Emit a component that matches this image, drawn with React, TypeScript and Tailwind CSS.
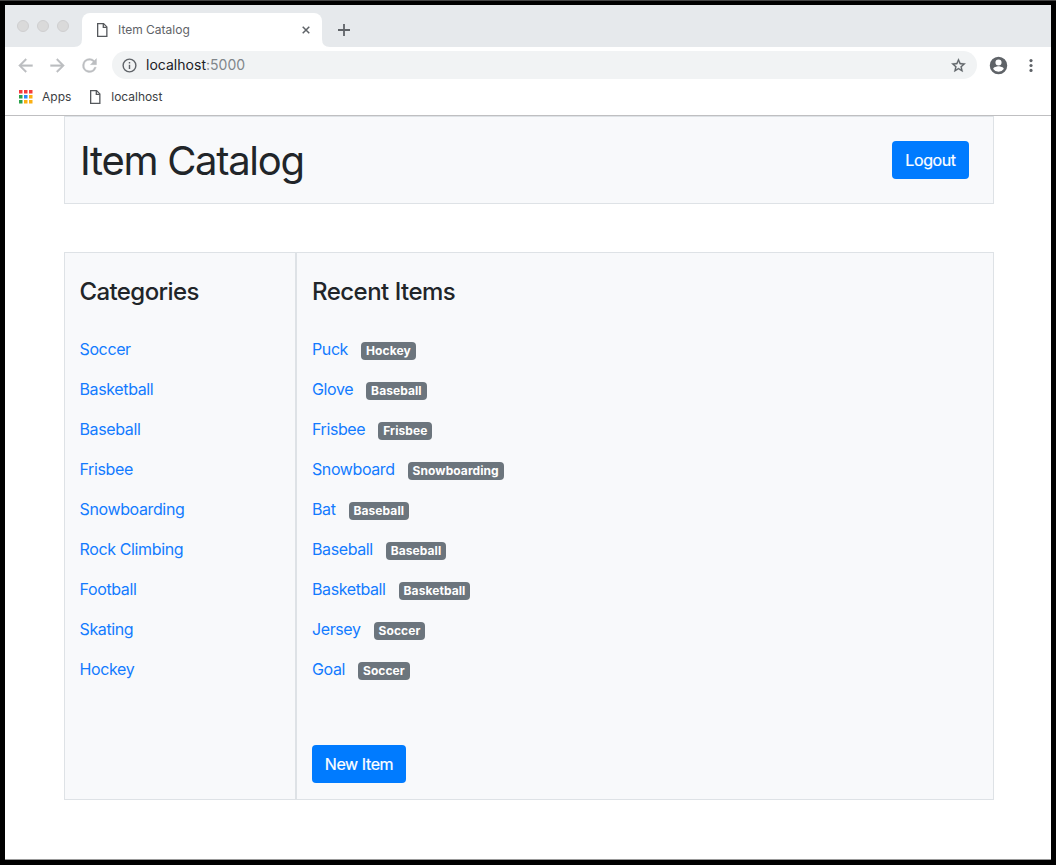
import React from "react";

const categories = ["Soccer", "Basketball", "Baseball", "Frisbee", "Snowboarding", "Rock Climbing", "Football", "Skating", "Hockey"];

const items = [
  { name: "Puck", category: "Hockey" },
  { name: "Glove", category: "Baseball" },
  { name: "Frisbee", category: "Frisbee" },
  { name: "Snowboard", category: "Snowboarding" },
  { name: "Bat", category: "Baseball" },
  { name: "Baseball", category: "Baseball" },
  { name: "Basketball", category: "Basketball" },
  { name: "Jersey", category: "Soccer" },
  { name: "Goal", category: "Soccer" },
];

const appColors = ["#f53b3b", "#f53b3b", "#f53b3b", "#2ba24c", "#2688f5", "#fbb012", "#2ba24c", "#fbb012", "#fbb012"];

function PageIcon() {
  return (
    <svg className="h-[14px] w-[11px] shrink-0" viewBox="0 0 11 14" fill="none" stroke="#55585c" strokeWidth="1.3">
      <path d="M.65.65H6.6L9.85 3.9V13.35H.65Z" />
      <path d="M6.3.65V4.3H9.85" />
    </svg>
  );
}

function TabStrip() {
  return (
    <div className="flex h-[42px] bg-[#e6e9ec] pt-2">
      <div className="flex w-[77px] gap-2 pt-[7px] pl-3">
        <span className="size-3 rounded-full border border-[#cfcfd0] bg-[#dadada]" />
        <span className="size-3 rounded-full border border-[#cfcfd0] bg-[#dadada]" />
        <span className="size-3 rounded-full border border-[#cfcfd0] bg-[#dadada]" />
      </div>
      <div className="relative flex h-[34px] w-[240px] items-center rounded-t-lg bg-white pr-[12px] pl-[15px]">
        <svg className="absolute bottom-0 -left-2 size-2" viewBox="0 0 8 8"><path d="M8 0V8H0Q8 8 8 0Z" fill="white" /></svg>
        <svg className="absolute -right-2 bottom-0 size-2" viewBox="0 0 8 8"><path d="M0 0V8H8Q0 8 0 0Z" fill="white" /></svg>
        <PageIcon />
        <span className="ml-[10px] flex-1 text-[12px] text-[#5f6368]">Item Catalog</span>
        <svg className="size-[8px]" viewBox="0 0 9 9" stroke="#5f6368" strokeWidth="1.7"><path d="M.8.8 8.2 8.2M8.2.8.8 8.2" /></svg>
      </div>
      <svg className="mt-[11px] ml-4 size-[12px]" viewBox="0 0 12 12" stroke="#5f6368" strokeWidth="1.8"><path d="M6 0V12M0 6H12" /></svg>
    </div>
  );
}

function Toolbar() {
  return (
    <div className="flex h-9 items-center pl-[10px]">
      <svg className="size-[21px]" viewBox="0 0 24 24" fill="#bcbec1" stroke="#bcbec1" strokeWidth=".4"><path d="M20 11H7.83l5.59-5.59L12 4l-8 8 8 8 1.41-1.41L7.83 13H20z" /></svg>
      <svg className="ml-[11px] size-[21px]" viewBox="0 0 24 24" fill="#bcbec1" stroke="#bcbec1" strokeWidth=".4"><path d="m12 4-1.41 1.41L16.17 11H4v2h12.17l-5.58 5.59L12 20l8-8z" /></svg>
      <svg className="ml-[11px] size-[21px]" viewBox="0 0 24 24" fill="#bcbec1" stroke="#bcbec1" strokeWidth=".4"><path d="M17.65 6.35A7.96 7.96 0 0 0 12 4a8 8 0 1 0 7.73 10h-2.08A6 6 0 1 1 12 6c1.66 0 3.14.69 4.22 1.78L13 11h7V4z" /></svg>
      <div className="ml-3 flex h-7 w-[865px] items-center rounded-full bg-[#f1f3f4] pr-[10px] pl-[9px]">
        <svg className="size-[17px]" viewBox="0 0 24 24" fill="#5f6368"><path d="M11 17h2v-6h-2v6zm1-15a10 10 0 1 0 0 20 10 10 0 0 0 0-20zm0 18a8 8 0 1 1 0-16 8 8 0 0 1 0 16zM11 9h2V7h-2v2z" /></svg>
        <span className="ml-2 flex-1 pb-px text-[14px] tracking-[0.02px] text-[#80868b]"><span className="text-[#202124]">localhost</span>:5000</span>
        <svg className="size-[17px]" viewBox="0 0 24 24" fill="#5f6368" stroke="#5f6368" strokeWidth=".4"><path d="m22 9.24-7.19-.62L12 2 9.19 8.63 2 9.24l5.46 4.73L5.82 21 12 17.27 18.18 21l-1.63-7.03L22 9.24zM12 15.4l-3.76 2.27 1-4.28-3.32-2.88 4.38-.38L12 6.1l1.71 4.04 4.38.38-3.32 2.88 1 4.28L12 15.4z" /></svg>
      </div>
      <svg className="ml-[11px] size-[21px]" viewBox="0 0 24 24" fill="#5f6368"><path d="M12 2a10 10 0 1 0 0 20 10 10 0 0 0 0-20zm0 3a3.5 3.5 0 1 1 0 7 3.5 3.5 0 0 1 0-7zm0 14.2a7.2 7.2 0 0 1-6-3.22c.03-1.99 4-3.08 6-3.08s5.97 1.09 6 3.08a7.2 7.2 0 0 1-6 3.22z" /></svg>
      <svg className="ml-[12px] size-5" viewBox="0 0 20 20" fill="#5f6368"><circle cx="10" cy="5.6" r="1.6" /><circle cx="10" cy="10.5" r="1.6" /><circle cx="10" cy="15.4" r="1.6" /></svg>
    </div>
  );
}

function Bookmarks() {
  return (
    <div className="flex h-[33px] items-center border-b border-[#bfbfc1] pb-1 pl-[14px] text-[12px] text-[#3c4043]">
      <svg className="h-[14px] w-[14px]" viewBox="0 0 14 14">
        {appColors.map((color, i) => (
          <rect key={i} x={(i % 3) * 5} y={Math.floor(i / 3) * 5} width="3.5" height="3.5" fill={color} />
        ))}
      </svg>
      <span className="mr-[19px] ml-[9px]">Apps</span>
      <PageIcon />
      <span className="ml-[10px] tracking-[-0.03px]">localhost</span>
    </div>
  );
}

export default function App() {
  return (
    <div className="h-[865px] w-[1056px] border-t border-[#444] bg-black px-[5px] pt-1 pb-[5px] font-['Inter',sans-serif]">
      <div className="h-full overflow-hidden border-b border-[#999] bg-white">
        <TabStrip />
        <Toolbar />
        <Bookmarks />
        <main className="mr-[57px] ml-[59px] text-[16px] leading-6 text-[#212529]">
          <header className="flex h-[88px] items-center justify-between border border-[#dee2e6] bg-[#f8f9fb] pr-6 pl-[15px]">
            <h1 className="pt-[2px] text-[40px] leading-[48px] tracking-[-1.3px]">Item Catalog</h1>
            <button className="h-[38px] w-[77px] rounded bg-[#007bff] tracking-[-0.4px] text-white [-webkit-text-stroke:0.2px_white]">Logout</button>
          </header>
          <div className="mt-12 flex h-[548px] border border-[#dee2e6] bg-[#f8f9fb]">
            <section className="w-[232px] border-r-2 border-[#dee2e6] pt-6 pl-[14.5px]">
              <h4 className="text-[24px] leading-[29px] font-medium tracking-[-0.6px]">Categories</h4>
              <ul className="mt-[31px] space-y-4 text-[#137bff]">
                {categories.map((c) => (
                  <li key={c}><a className="tracking-[-0.37px]">{c}</a></li>
                ))}
              </ul>
            </section>
            <section className="flex-1 pt-6 pl-[15px]">
              <h4 className="text-[24px] leading-[29px] font-medium tracking-[-0.52px]">Recent Items</h4>
              <ul className="mt-[31px] space-y-4">
                {items.map((item) => (
                  <li key={item.name} className="flex h-6 items-center">
                    <a className="tracking-[-0.4px] text-[#137bff]">{item.name}</a>
                    <span className="mt-[3px] ml-[13px] h-[18px] rounded bg-[#6c757d] px-[5px] text-[12px] leading-[18px] font-bold tracking-[0.08px] text-white">{item.category}</span>
                  </li>
                ))}
              </ul>
              <button className="mt-16 h-[38px] w-[94px] rounded bg-[#007bff] tracking-[-0.4px] text-white [-webkit-text-stroke:0.2px_white]">New Item</button>
            </section>
          </div>
        </main>
      </div>
    </div>
  );
}
